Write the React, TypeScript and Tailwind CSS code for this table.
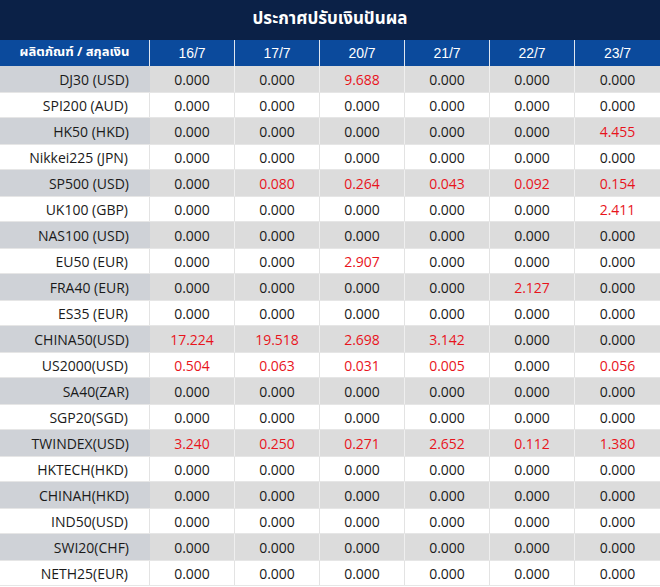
const dates = ['16/7', '17/7', '20/7', '21/7', '22/7', '23/7'];

const rows: { name: string; values: string[] }[] = [
  { name: 'DJ30 (USD)', values: ['0.000', '0.000', '9.688', '0.000', '0.000', '0.000'] },
  { name: 'SPI200 (AUD)', values: ['0.000', '0.000', '0.000', '0.000', '0.000', '0.000'] },
  { name: 'HK50 (HKD)', values: ['0.000', '0.000', '0.000', '0.000', '0.000', '4.455'] },
  { name: 'Nikkei225 (JPN)', values: ['0.000', '0.000', '0.000', '0.000', '0.000', '0.000'] },
  { name: 'SP500 (USD)', values: ['0.000', '0.080', '0.264', '0.043', '0.092', '0.154'] },
  { name: 'UK100 (GBP)', values: ['0.000', '0.000', '0.000', '0.000', '0.000', '2.411'] },
  { name: 'NAS100 (USD)', values: ['0.000', '0.000', '0.000', '0.000', '0.000', '0.000'] },
  { name: 'EU50 (EUR)', values: ['0.000', '0.000', '2.907', '0.000', '0.000', '0.000'] },
  { name: 'FRA40 (EUR)', values: ['0.000', '0.000', '0.000', '0.000', '2.127', '0.000'] },
  { name: 'ES35 (EUR)', values: ['0.000', '0.000', '0.000', '0.000', '0.000', '0.000'] },
  { name: 'CHINA50(USD)', values: ['17.224', '19.518', '2.698', '3.142', '0.000', '0.000'] },
  { name: 'US2000(USD)', values: ['0.504', '0.063', '0.031', '0.005', '0.000', '0.056'] },
  { name: 'SA40(ZAR)', values: ['0.000', '0.000', '0.000', '0.000', '0.000', '0.000'] },
  { name: 'SGP20(SGD)', values: ['0.000', '0.000', '0.000', '0.000', '0.000', '0.000'] },
  { name: 'TWINDEX(USD)', values: ['3.240', '0.250', '0.271', '2.652', '0.112', '1.380'] },
  { name: 'HKTECH(HKD)', values: ['0.000', '0.000', '0.000', '0.000', '0.000', '0.000'] },
  { name: 'CHINAH(HKD)', values: ['0.000', '0.000', '0.000', '0.000', '0.000', '0.000'] },
  { name: 'IND50(USD)', values: ['0.000', '0.000', '0.000', '0.000', '0.000', '0.000'] },
  { name: 'SWI20(CHF)', values: ['0.000', '0.000', '0.000', '0.000', '0.000', '0.000'] },
  { name: 'NETH25(EUR)', values: ['0.000', '0.000', '0.000', '0.000', '0.000', '0.000'] },
];

export default function App() {
  return (
    <div className="w-[660px] bg-white font-['Open_Sans','Noto_Sans',sans-serif] text-[14px] text-[#1a1a1a]">
      <div className="flex h-[40px] items-center justify-center bg-[#0b2147] text-[17px] font-bold text-white font-['Tahoma','Noto_Sans_Thai','Noto_Sans',sans-serif]">
        ประกาศปรับเงินปันผล
      </div>
      <div className="grid h-[26px] grid-cols-[150px_repeat(6,85px)] bg-[#0b4a9c] text-white">
        <div className="flex items-center justify-center border-r border-[#dfe6f0] text-[13px] font-bold font-['Tahoma','Noto_Sans_Thai',sans-serif]">
          ผลิตภัณฑ์ / สกุลเงิน
        </div>
        {dates.map((d, i) => (
          <div
            key={d}
            className={`flex items-center justify-center font-['Liberation_Sans',sans-serif] text-[14px] ${i < 5 ? 'border-r border-[#dfe6f0]' : ''}`}
          >
            {d}
          </div>
        ))}
      </div>
      {rows.map((row, r) => {
        const gray = r % 2 === 0;
        return (
          <div
            key={row.name}
            className={`grid h-[26px] grid-cols-[150px_repeat(6,85px)] ${gray ? 'bg-[#dcdcdc]' : 'bg-white border-y border-[#e6e6e6]'}`}
          >
            <div
              className={`flex items-center justify-end pr-[21px] ${gray ? 'bg-[#cfd2d7]' : 'border-r border-[#e3e3e3]'}`}
            >
              {row.name}
            </div>
            {row.values.map((v, i) => (
              <div
                key={i}
                className={`flex items-center justify-center ${v !== '0.000' ? 'text-[#e8141c]' : ''} ${i < 5 ? (gray ? 'border-r border-[#efefef]' : 'border-r border-[#e3e3e3]') : ''}`}
              >
                {v}
              </div>
            ))}
          </div>
        );
      })}
    </div>
  );
}
